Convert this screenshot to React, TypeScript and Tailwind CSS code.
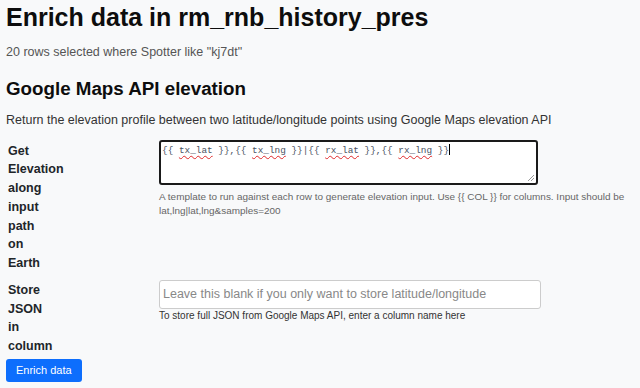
import React from 'react';

const sans = { fontFamily: '"Liberation Sans", Arial, sans-serif' };

function Typo({ children }: { children: React.ReactNode }) {
    return <span className="underline decoration-wavy decoration-[#e0292b] decoration-1 underline-offset-[2px]">{children}</span>;
}

function TemplateBox() {
    const tpl = '{{ tx_lat }},{{ tx_lng }}|{{ rx_lat }},{{ rx_lng }}';
    const parts = tpl.split(/(tx_lat|tx_lng|rx_lat|rx_lng)/);
    return (
        <div className="relative w-[379px] h-[45px] bg-white border-2 border-[#1a1a1a] rounded-[3px] pl-[1px] pt-[1.5px]">
            <div className="text-[9.4px] leading-[12px] text-[#4a5263] whitespace-pre" style={{ fontFamily: '"Liberation Mono", monospace' }}>
                {parts.map((p, i) => (i % 2 === 1 ? <Typo key={i}>{p}</Typo> : <span key={i}>{p}</span>))}
                <span className="inline-block w-px h-[11px] bg-black align-[-2px]"></span>
            </div>
            <svg className="absolute right-[1px] bottom-[1px]" width="8" height="8" viewBox="0 0 8 8">
                <path d="M7 1 L1 7 M7 4 L4 7" stroke="#9a9a9a" strokeWidth="1" />
            </svg>
        </div>
    );
}

export default function App() {
    return (
        <div className="min-h-screen w-full bg-[#f8f9fa] pl-[6px] pr-[8px] text-[#212529]" style={sans}>
            <h1 className="pt-[2px] text-[25px] leading-[30px] font-bold text-[#0d0d0d]">Enrich data in rm_rnb_history_pres</h1>
            <p className="mt-[11px] text-[12.5px] leading-[18.75px] text-[#555]">20 rows selected where Spotter like "kj7dt"</p>
            <h3 className="mt-[16px] text-[18.75px] leading-[22.5px] font-bold text-[#0d0d0d]">Google Maps API elevation</h3>
            <p className="mt-[11px] text-[12.5px] leading-[18.75px] text-[#333]">
                Return the elevation profile between two latitude/longitude points using Google Maps elevation API
            </p>

            <div className="mt-[10px] grid grid-cols-[153px_1fr]">
                <div className="pl-[2px] pt-[1.5px] w-[1px] font-bold text-[12.5px] leading-[18.75px]">Get Elevation along input path on Earth</div>
                <div>
                    <TemplateBox />
                    <div className="mt-[5px] text-[9.95px] leading-[14px] text-[#666]">
                        {'A template to run against each row to generate elevation input. Use {{ COL }} for columns. Input should be lat,lng|lat,lng&samples=200'}
                    </div>
                </div>
            </div>

            <div className="mt-[7px] grid grid-cols-[153px_1fr]">
                <div className="pl-[2px] pt-[1px] w-[1px] font-bold text-[12.5px] leading-[18.75px]">Store JSON in column</div>
                <div>
                    <input
                        type="text"
                        placeholder="Leave this blank if you only want to store latitude/longitude"
                        className="w-[382px] h-[29px] bg-white border border-[#ccc] rounded-[3px] px-[3px] text-[12.5px] placeholder:text-[#888] outline-none"
                        style={sans}
                    />
                    <div className="mt-[1px] text-[10px] leading-[12px] text-[#333]">To store full JSON from Google Maps API, enter a column name here</div>
                </div>
            </div>

            <button className="mt-[3px] h-[23px] px-[10px] bg-[#0d6efd] text-white text-[11px] leading-[15px] rounded-[3px]" style={sans}>
                Enrich data
            </button>
        </div>
    );
}
